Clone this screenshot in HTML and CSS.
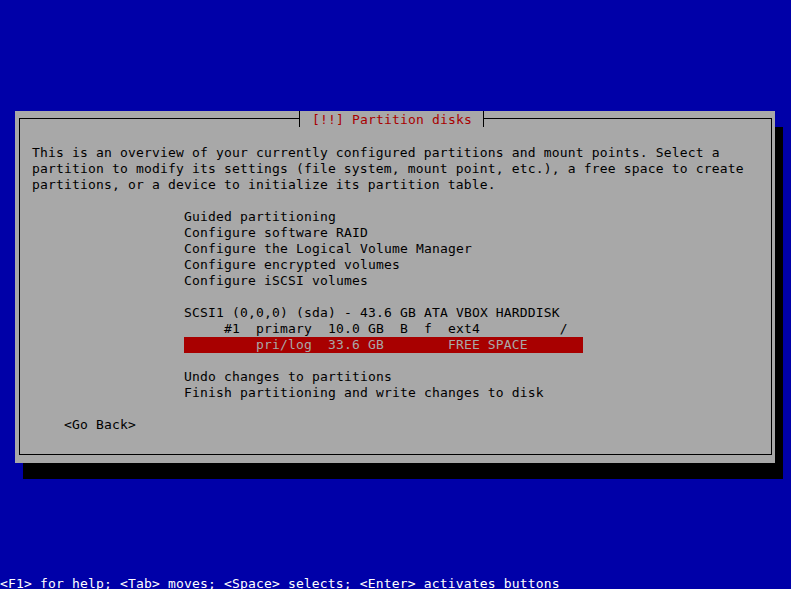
FILE: index.html
```
<!DOCTYPE html>
<html lang="en">
<head>
    <meta charset="UTF-8">
    <title>Partition disks</title>
    <link rel="stylesheet" href="styles.css">
</head>
<body>
    <div class="screen">
        <div class="dialog">
            <div class="title-row">
                <span class="rule rule-left"></span>
                <span class="tick"></span>
                <span class="title">[!!] Partition disks</span>
                <span class="tick"></span>
                <span class="rule rule-right"></span>
            </div>
            <div class="frame">
                <div class="intro">This is an overview of your currently configured partitions and mount points. Select a
partition to modify its settings (file system, mount point, etc.), a free space to create
partitions, or a device to initialize its partition table.</div>

                <div class="menu">
                    <div class="line">Guided partitioning</div>
                    <div class="line">Configure software RAID</div>
                    <div class="line">Configure the Logical Volume Manager</div>
                    <div class="line">Configure encrypted volumes</div>
                    <div class="line">Configure iSCSI volumes</div>
                    <div class="line"> </div>
                    <div class="line">SCSI1 (0,0,0) (sda) - 43.6 GB ATA VBOX HARDDISK</div>
                    <div class="line">     #1  primary  10.0 GB  B  f  ext4          /</div>
                    <div class="line selected">         pri/log  33.6 GB        FREE SPACE</div>
                    <div class="line"> </div>
                    <div class="line">Undo changes to partitions</div>
                    <div class="line">Finish partitioning and write changes to disk</div>
                </div>

                <div class="buttons">&lt;Go Back&gt;</div>
            </div>
        </div>
    </div>
    <div class="help">&lt;F1&gt; for help; &lt;Tab&gt; moves; &lt;Space&gt; selects; &lt;Enter&gt; activates buttons</div>
</body>
</html>
```

FILE: styles.css
```
body {
    margin: 0;
    height: 589px;
    overflow: hidden;
    background-color: #0000a8;
    font-family: "DejaVu Sans Mono", monospace;
    font-size: 13px;
    letter-spacing: 0.17px;
    line-height: 16px;
    color: #000;
}
.screen {
    padding-top: 111px;
    padding-left: 15px;
}
.dialog {
    width: 760px;
    height: 352px;
    box-sizing: border-box;
    background: #a8a8a8;
    box-shadow: 8px 16px 0 #000;
    padding: 0 3px 8px 4px;
    display: flex;
    flex-direction: column;
}
.title-row {
    display: flex;
    height: 16px;
}
.rule {
    align-self: flex-end;
    height: 9px;
    box-sizing: border-box;
    border-top: 1px solid #000;
}
.rule-left {
    width: 280px;
    border-left: 1px solid #000;
}
.rule-right {
    flex: 1;
    border-right: 1px solid #000;
}
.tick {
    width: 1px;
    height: 16px;
    background: #000;
}
.title {
    color: #a80000;
    white-space: pre;
    padding: 1px 11px 0 12px;
}
.frame {
    flex: 1;
    border: 1px solid #000;
    border-top: 0;
    padding: 18px 0 0 12px;
}
.intro {
    white-space: pre;
}
.menu {
    margin: 16px 0 0 152px;
}
.line {
    white-space: pre;
    height: 16px;
}
.selected {
    width: 399px;
    background: #a80000;
    color: #a8a8a8;
}
.buttons {
    margin: 16px 0 0 32px;
}
.help {
    margin-top: 113px;
    color: #fff;
    white-space: pre;
}
```
